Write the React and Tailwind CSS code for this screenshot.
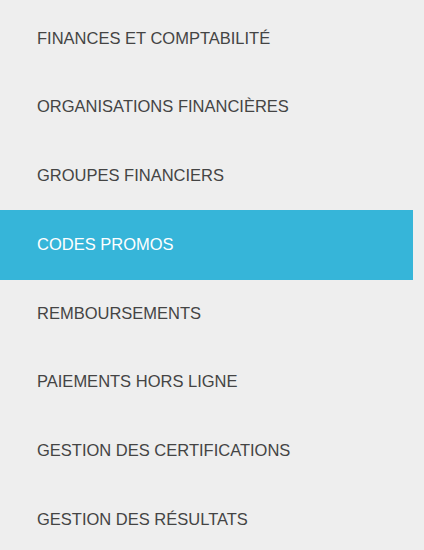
import React from "react";

const items = [
  "FINANCES ET COMPTABILITÉ",
  "ORGANISATIONS FINANCIÈRES",
  "GROUPES FINANCIERS",
  "CODES PROMOS",
  "REMBOURSEMENTS",
  "PAIEMENTS HORS LIGNE",
  "GESTION DES CERTIFICATIONS",
  "GESTION DES RÉSULTATS",
];

export default function App() {
  return (
    <div className="w-[424px] h-[550px] bg-[#eeeeee] overflow-hidden" style={{ fontFamily: '"Liberation Sans", Arial, sans-serif' }}>
      <ul className="w-[413px] pt-[4.5px] flex flex-col">
        {items.map((label) => {
          const active = label === "CODES PROMOS";
          return (
            <li
              key={label}
              className={
                active
                  ? "h-[70px] -my-[0.625px] flex items-center pl-[37px] pb-[2px] bg-[#36b5d9] text-white text-[16.5px]"
                  : "h-[68.75px] flex items-center pl-[37px] pb-[2px] text-[#444444] text-[16.5px]"
              }
            >
              {label}
            </li>
          );
        })}
      </ul>
    </div>
  );
}
